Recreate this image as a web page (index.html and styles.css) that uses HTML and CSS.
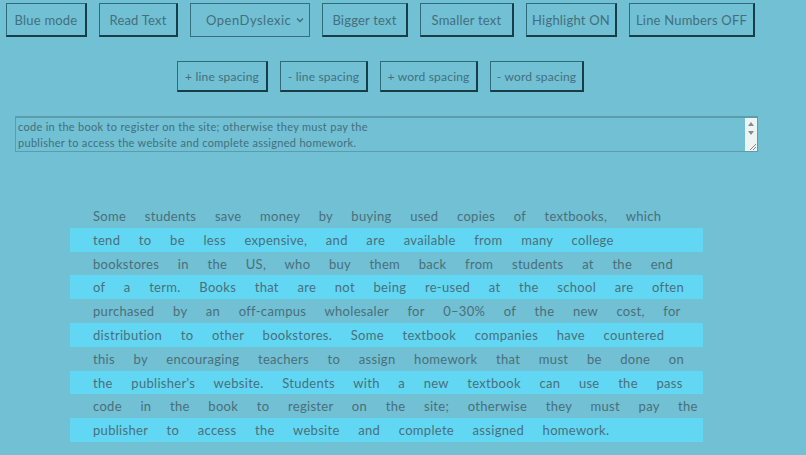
FILE: index.html
```html
<!DOCTYPE html>
<html>
<head>
<meta charset="utf-8">
<link rel="stylesheet" href="styles.css">
</head>
<body>
<div class="page">
  <div class="toolbar">
    <button class="btn w-blue">Blue mode</button>
    <button class="btn w-read">Read Text</button>
    <div class="select"><span class="select-label">OpenDyslexic</span><svg class="chev" width="8" height="6" viewBox="0 0 8 6"><path d="M1 1.5 L4 4.5 L7 1.5" fill="none" stroke="#3f6c78" stroke-width="1.3"/></svg></div>
    <button class="btn w-bigger">Bigger text</button>
    <button class="btn w-smaller">Smaller text</button>
    <button class="btn w-hl">Highlight ON</button>
    <button class="btn w-ln">Line Numbers OFF</button>
  </div>
  <div class="spacing-bar">
    <button class="btn small w-pl">+ line spacing</button>
    <button class="btn small w-ml">- line spacing</button>
    <button class="btn small w-pw">+ word spacing</button>
    <button class="btn small w-mw">- word spacing</button>
  </div>
  <div class="textarea">
    <div class="ta-text">
      <div>code in the book to register on the site; otherwise they must pay the</div>
      <div>publisher to access the website and complete assigned homework.</div>
    </div>
    <div class="ta-scroll">
      <svg class="arr" width="8" height="6" viewBox="0 0 8 6"><path d="M1 5 L4 1 L7 5 Z" fill="#8a8a8a"/></svg>
      <svg class="arr" width="8" height="6" viewBox="0 0 8 6"><path d="M1 1 L4 5 L7 1 Z" fill="#8a8a8a"/></svg>
      <svg class="grip" width="8" height="8" viewBox="0 0 8 8"><path d="M2 8 L8 2 M5 8 L8 5" stroke="#8a8a8a" stroke-width="1"/></svg>
    </div>
  </div>
  <div class="passage">
    <div class="line">Some students save money by buying used copies of textbooks, which</div>
    <div class="line hl">tend to be less expensive, and are available from many college</div>
    <div class="line">bookstores in the US, who buy them back from students at the end</div>
    <div class="line hl">of a term. Books that are not being re-used at the school are often</div>
    <div class="line">purchased by an off-campus wholesaler for 0–30% of the new cost, for</div>
    <div class="line hl">distribution to other bookstores. Some textbook companies have countered</div>
    <div class="line">this by encouraging teachers to assign homework that must be done on</div>
    <div class="line hl">the publisher's website. Students with a new textbook can use the pass</div>
    <div class="line">code in the book to register on the site; otherwise they must pay the</div>
    <div class="line hl">publisher to access the website and complete assigned homework.</div>
  </div>
</div>
</body>
</html>
```
FILE: styles.css
```css
html, body {
  margin: 0;
  padding: 0;
  background: #71c0d4;
}
body {
  font-family: Lato, "Liberation Sans", sans-serif;
  color: #456f7b;
  width: 806px;
  height: 455px;
  overflow: hidden;
}
.page {
  padding-top: 3px;
}
.toolbar {
  display: flex;
  gap: 12px;
  padding-left: 6px;
}
.btn {
  font-family: Lato, "Liberation Sans", sans-serif;
  font-size: 13px;
  letter-spacing: 0.2px;
  color: #446f7b;
  background: #71c0d4;
  height: 34px;
  padding: 0;
  text-align: center;
  white-space: nowrap;
  border-style: solid;
  border-width: 1px 2px 2px 1px;
  border-color: #2f6b7a #173d49 #173d49 #2f6b7a;
  margin: 0;
  box-sizing: border-box;
}
.w-blue { width: 81px; }
.w-read { width: 79px; }
.w-bigger { width: 86px; }
.w-smaller { width: 94px; }
.w-hl { width: 91px; }
.w-ln { width: 126px; }
.w-pl { width: 91px; }
.w-ml { width: 88px; }
.w-pw { width: 98px; }
.w-mw { width: 94px; }
.select {
  width: 120px;
  height: 34px;
  box-sizing: border-box;
  border: 1px solid #356f7d;
  display: flex;
  align-items: center;
  padding-left: 15px;
  font-size: 13px;
  letter-spacing: 0.5px;
  color: #446f7b;
}
.select-label {
  flex: 1;
}
.chev {
  margin-right: 5px;
}
.spacing-bar {
  display: flex;
  gap: 12px;
  margin-top: 24px;
  padding-left: 177px;
}
.btn.small {
  height: 31px;
  font-size: 12px;
}
.textarea {
  margin: 24px 0 0 15px;
  width: 743px;
  height: 36px;
  box-sizing: border-box;
  border: 1px solid #5c9cad;
  border-top-width: 2px;
  display: flex;
}
.ta-text {
  flex: 1;
  font-size: 11px;
  letter-spacing: 0.3px;
  line-height: 16px;
  padding: 1px 0 0 2px;
  color: #446f7b;
}
.ta-scroll {
  width: 12px;
  background: #eef3f4;
  display: flex;
  flex-direction: column;
  align-items: center;
  position: relative;
}
.arr {
  margin-top: 3px;
}
.grip {
  position: absolute;
  right: 1px;
  bottom: 1px;
}
.passage {
  margin: 52px 0 0 70px;
  width: 633px;
}
.line {
  height: 23.8px;
  line-height: 25px;
  padding-left: 23px;
  font-size: 13px;
  letter-spacing: 0.3px;
  word-spacing: 15px;
  white-space: nowrap;
  color: #4a6f7a;
}
.line.hl {
  background: #62d7f3;
}
```
